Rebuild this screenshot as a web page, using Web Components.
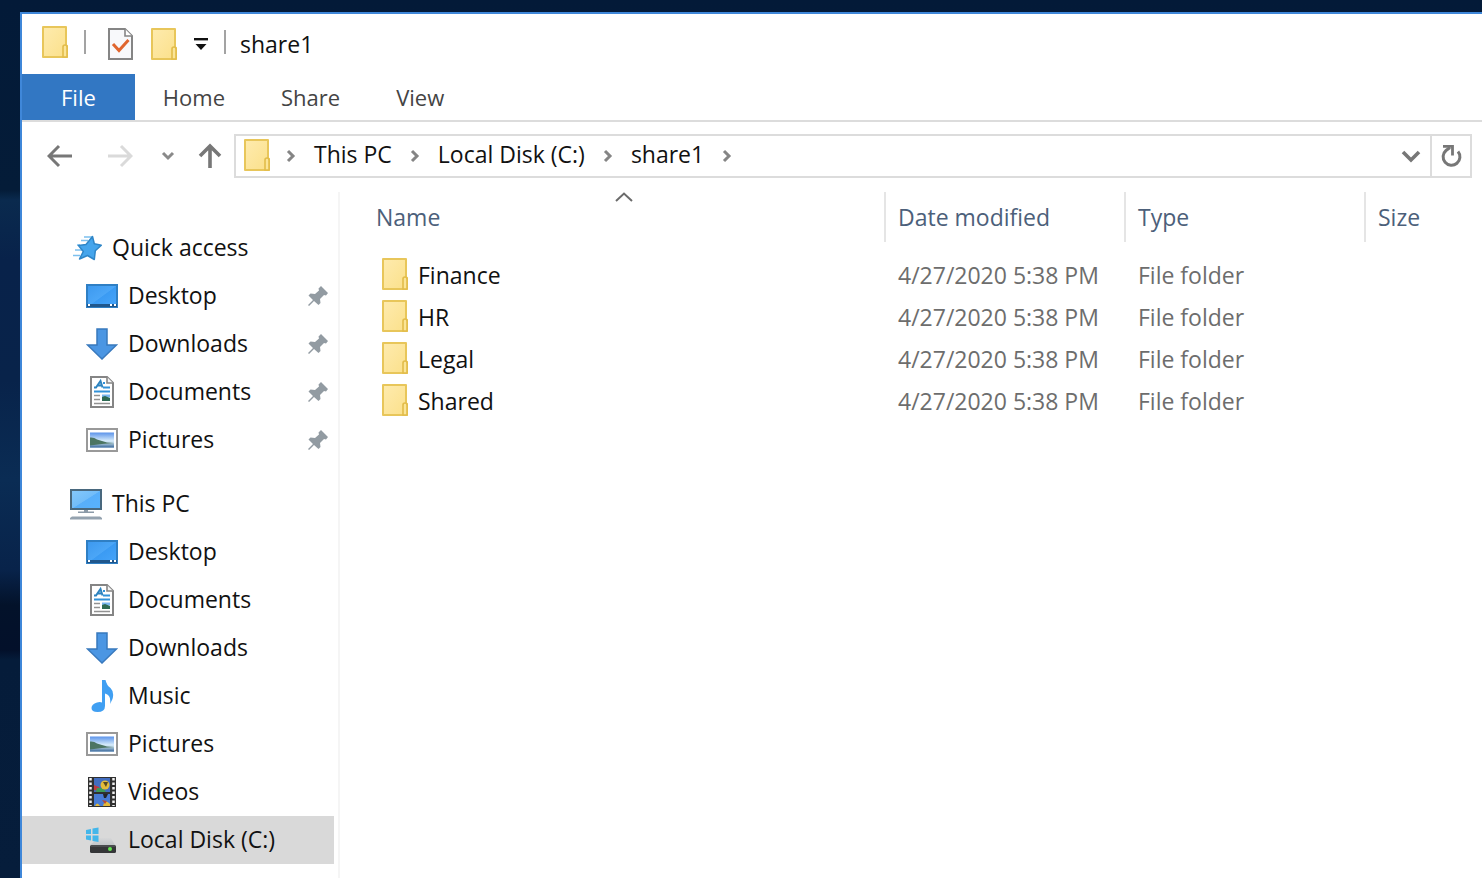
<!DOCTYPE html>
<html lang="en">
<head>
<meta charset="utf-8">
<meta name="viewport" content="width=device-width, initial-scale=1">
<title>share1</title>
<style>
    :root {
        --color-text: #111;
        --color-muted: #6d6d6d;
        --color-heading: #4c607a;
        --color-accent: #3277c3;
        --color-line: #dcdcdc;
        --color-selected: #d9d9d9;
        --text-body: 23px;
        --text-tab: 22px;
    }
    body {
        margin: 0;
        font-family: "Open Sans", "Noto Sans", sans-serif;
        font-size: 23px;
        line-height: 32px;
        color: var(--color-text);
    }
</style>
</head>
<body>
<desktop-background>
    <explorer-window>
        <title-bar slot="title">share1</title-bar>
        <ribbon-tabs slot="ribbon">
            <ribbon-tab active>File</ribbon-tab>
            <ribbon-tab>Home</ribbon-tab>
            <ribbon-tab>Share</ribbon-tab>
            <ribbon-tab>View</ribbon-tab>
        </ribbon-tabs>
        <address-bar slot="address">
            <path-crumb>This PC</path-crumb>
            <path-crumb>Local Disk (C:)</path-crumb>
            <path-crumb>share1</path-crumb>
        </address-bar>
        <nav-pane slot="nav">
            <nav-group>
                <nav-item icon="star" root>Quick access</nav-item>
                <nav-item icon="desktop" pinned>Desktop</nav-item>
                <nav-item icon="download" pinned>Downloads</nav-item>
                <nav-item icon="document" pinned>Documents</nav-item>
                <nav-item icon="picture" pinned>Pictures</nav-item>
            </nav-group>
            <nav-group>
                <nav-item icon="computer" root>This PC</nav-item>
                <nav-item icon="desktop">Desktop</nav-item>
                <nav-item icon="document">Documents</nav-item>
                <nav-item icon="download">Downloads</nav-item>
                <nav-item icon="music">Music</nav-item>
                <nav-item icon="picture">Pictures</nav-item>
                <nav-item icon="video">Videos</nav-item>
                <nav-item icon="disk" selected>Local Disk (C:)</nav-item>
            </nav-group>
        </nav-pane>
        <file-list></file-list>
    </explorer-window>
</desktop-background>

<script>
const icons = {
    folder: [26, 32, `
        <linearGradient id="g" x1="0" y1="0" x2="1" y2="1"><stop offset="0" stop-color="#feebae"/><stop offset="1" stop-color="#fbe08a"/></linearGradient>
        <path d="M1 1h23v18l1 1v11H1z" fill="url(#g)" stroke="#e8c65a" stroke-width="2" stroke-linejoin="round"/>
        <path d="M21 31V21q0-2 2-2t2 2v10z" fill="#fbe597" stroke="#e2bc4a" stroke-width="1.6"/>`],
    check: [26, 32, `
        <path d="M1 1h16l7 7v23H1z" fill="#f8f9fb" stroke="#858585" stroke-width="2"/>
        <path d="M17 1v7h7" fill="#fff" stroke="#858585" stroke-width="1.6"/>
        <path d="M5 16l6 6.500L20.500 12" fill="none" stroke="#e0662f" stroke-width="3"/>`],
    customize: [14, 14, `
        <path d="M0 1h14v2.4H0z" fill="#111"/><path d="M1.5 7h11L7 13z" fill="#111"/>`],
    back: [26, 24, `<path d="M25 12H3M12 2L2 12l10 10" fill="none" stroke="#777" stroke-width="3"/>`],
    forward: [26, 24, `<path d="M1 12h22M14 2l10 10-10 10" fill="none" stroke="#dadada" stroke-width="3"/>`],
    recent: [14, 10, `<path d="M2 2l5 5 5-5" fill="none" stroke="#8a8a8a" stroke-width="3"/>`],
    up: [24, 26, `<path d="M12 25V3M2 13L12 3l10 10" fill="none" stroke="#777" stroke-width="3.6"/>`],
    next: [10, 14, `<path d="M2 2l5 5-5 5" fill="none" stroke="#858585" stroke-width="3"/>`],
    expand: [20, 14, `<path d="M2 3l8 8 8-8" fill="none" stroke="#777" stroke-width="3.6"/>`],
    refresh: [22, 24, `
        <path d="M18 7.500A8.400 8.400 0 1 1 6 6.500L10 3.500" fill="none" stroke="#777" stroke-width="3"/>
        <path d="M3 2.400h9.500v9" fill="none" stroke="#777" stroke-width="2.800"/>`],
    sort: [18, 10, `<path d="M1 9l8-7.5L17 9" fill="none" stroke="#6b6b6b" stroke-width="2"/>`],
    pin: [22, 22, `
        <path d="M14 1l7 7-2 2.500-2-.5-4 4 .5 4-2 2-4.500-4L2 21l-1-1 5-5-4.500-4.500 2-2 4.500.5L12 5.500 11.500 3.500z" fill="#929ba2"/>`],
    star: [32, 28, `
        <path d="M14 3h8M11 6.500h7M5 16h7M3 21.500h7M7 11h3" stroke="#7cc0ee" stroke-width="1.600"/>
        <path d="M22.500 2.500l1.800 7.200 7 1.600-6 5.500-1 8.700-6.800-4-8 3.500 3.800-7.500-4.800-6 7.500-1z" fill="#45a5ec" stroke="#2f86c8" stroke-width="1.500" stroke-linejoin="round"/>`],
    desktop: [32, 24, `
        <linearGradient id="g" x1="0" y1="0" x2="1" y2="1"><stop offset="0" stop-color="#3c98ee"/><stop offset=".5" stop-color="#4ba6f7"/><stop offset=".52" stop-color="#3b9bf3"/><stop offset="1" stop-color="#47a5fa"/></linearGradient>
        <path d="M1 1h30v22H1z" fill="url(#g)" stroke="#2f7fc4" stroke-width="2"/>
        <path d="M1 20h30v3H1z" fill="#20578c"/>
        <path d="M2 21h2m20 0h2m2 0h2" stroke="#fff" stroke-width="2"/>`],
    download: [32, 32, `<path d="M11 1h10v16h9.500L16 31 1.500 17H11z" fill="#4b96e3" stroke="#3979bd" stroke-width="1.500"/>`],
    document: [26, 32, `
        <path d="M2 1h16l6 6v24H2z" fill="#fff" stroke="#858585" stroke-width="2"/>
        <path d="M18 1v6h6" fill="#f4f4f4" stroke="#858585" stroke-width="1.600"/>
        <path d="M5 11.500h2L11.500 5l2 6.500M8 9.500h4" fill="none" stroke="#2d83bf" stroke-width="2"/>
        <path d="M14 7h2M14 11.500h7M5 15.500h16" stroke="#3292d8" stroke-width="2"/>
        <path d="M5 19.500h6M5 23.500h6M5 27.500h16" stroke="#929292" stroke-width="1.600"/>
        <path d="M13 18.500h8v3h-8z" fill="#79b6ef"/><path d="M13 21l3-1 5 2v3h-8z" fill="#2e6a53"/>`],
    picture: [32, 24, `
        <linearGradient id="g" x2="0" y2="1"><stop offset="0" stop-color="#5b93ea"/><stop offset=".55" stop-color="#d5eafa"/><stop offset="1" stop-color="#8eb4d2"/></linearGradient>
        <linearGradient id="w" x2="0" y2="1"><stop offset="0" stop-color="#b5cfdc"/><stop offset="1" stop-color="#39679c"/></linearGradient>
        <path d="M1 1h30v22H1z" fill="#fff" stroke="#999" stroke-width="2"/>
        <path d="M4 4.500h24v15H4z" fill="url(#g)"/>
        <path d="M4 15h24v4.500H4z" fill="url(#w)"/>
        <path d="M4 9.500q4-.5 7 2l5 1.500 5 1.500 7 .5-12 1-12 1.500z" fill="#4c7562"/>`],
    computer: [34, 32, `
        <linearGradient id="g" x1="0" y1="0" x2="1" y2="1"><stop offset="0" stop-color="#86c9fb"/><stop offset=".5" stop-color="#72bdf9"/><stop offset=".52" stop-color="#58affa"/><stop offset="1" stop-color="#58b2fd"/></linearGradient>
        <path d="M2 2h30v19H2z" fill="url(#g)" stroke="#49687e" stroke-width="2"/>
        <path d="M15 22h4v1.500h6V25H9v-1.500h6z" fill="#8b9aa8"/>
        <path d="M3 28.500h28l2 1.500v1.500H1V30z" fill="#94a2af"/>`],
    music: [24, 34, `
        <path d="M12 1h3.500q1 5 5 8 4 4 2 11l-2.500 5q1.500-9-5-10.500V27q0 6-7.500 6-6 0-6-4t5.500-5.500q3-1 5 0z" fill="#409ff2"/>`],
    video: [28, 30, `
        <path d="M0 0h28v30H0z" fill="#303030"/>
        <path d="M6 1h16v14H6z" fill="#426dc0"/><path d="M6 17h16v12H6z" fill="#487bd4"/>
        <path d="M2.500 1v28M25.500 1v28" stroke="#f2f2f2" stroke-width="2.500" stroke-dasharray="2.500 2"/>
        <path d="M6 13V8l5 2 2 4z" fill="#bd3c42"/><path d="M9 11h6l3 4H8z" fill="#3c9a58"/>
        <circle cx="17" cy="8" r="4.500" fill="#e4bd3a"/><path d="M15 5h5l-2 5z" fill="#574b22"/>
        <path d="M15 17h5l-2 4h-2z" fill="#252525"/><path d="M7 29q2-5 5 0m3 0q2-8 7-2v2z" fill="#e2b93b"/>
        <path d="M14 23l5 1-2 3z" fill="#b64938"/>`],
    disk: [32, 28, `
        <linearGradient id="g" x2="0" y2="1"><stop offset="0" stop-color="#d6d7d8"/><stop offset="1" stop-color="#c2c5c8"/></linearGradient>
        <path d="M12 12h13l4 7H4z" fill="url(#g)"/>
        <path d="M0 4l5-1v5H0zM6.500 2.500l6-1V8h-6zM0 9.500h5v5l-5-1zM6.500 9.500h6V16l-6-1z" fill="#43b6ea"/>
        <rect x="4" y="19" width="26" height="8" rx="1.500" fill="#353638"/>
        <path d="M5 20h24" stroke="#606264" stroke-width="1"/>
        <circle cx="24" cy="23" r="2" fill="#62e450"/>`]
}

class BaseElement extends HTMLElement {
    constructor() {
        super()
        this.attachShadow({ mode: 'open' })
    }
    connectedCallback() {
        this.shadowRoot.innerHTML = this.render()
    }
}

const buttonReset = `
    button {
        display: flex;
        align-items: center;
        justify-content: center;
        margin: 0;
        padding: 0;
        border: 0;
        background: none;
        color: inherit;
        font: inherit;
    }
`

customElements.define(
    'ui-icon',
    class extends BaseElement {
        render() {
            const [width, height, shapes] = icons[this.getAttribute('name')]
            return `
                <style>
                    :host { display: block; flex: none; }
                    svg { display: block; }
                </style>
                <svg width="${width}" height="${height}" viewBox="0 0 ${width} ${height}" aria-hidden="true">${shapes}</svg>
            `
        }
    }
)

customElements.define(
    'desktop-background',
    class extends BaseElement {
        render() {
            return `
                <style>
                    :host {
                        display: flex;
                        box-sizing: border-box;
                        min-height: 100vh;
                        padding: 12px 0 0 20px;
                        background: linear-gradient(
                            #031a38 0, #041c38 190px, #0a2a4e 200px, #08224a 260px,
                            #08234a 380px, #0a2c54 480px, #08234a 570px, #03122a 605px,
                            #03102a 650px, #051c3a 660px, #061d3b 100%
                        );
                    }
                    ::slotted(*) { flex: 1; min-width: 0; }
                </style>
                <slot></slot>
            `
        }
    }
)

customElements.define(
    'explorer-window',
    class extends BaseElement {
        render() {
            return `
                <style>
                    :host {
                        display: flex;
                        flex-direction: column;
                        border: solid #3f87d9;
                        border-width: 2px 0 0 2px;
                        background: #fff;
                    }
                    main {
                        display: flex;
                        flex: 1;
                        padding-top: 14px;
                    }
                    slot:not([name])::slotted(*) { flex: 1; min-width: 0; }
                </style>
                <slot name="title"></slot>
                <slot name="ribbon"></slot>
                <slot name="address"></slot>
                <main>
                    <slot name="nav"></slot>
                    <slot></slot>
                </main>
            `
        }
    }
)

customElements.define(
    'title-bar',
    class extends BaseElement {
        render() {
            return `
                <style>
                    ${buttonReset}
                    :host {
                        display: flex;
                        align-items: center;
                        height: 60px;
                        padding-left: 20px;
                    }
                    .line {
                        width: 2px;
                        height: 24px;
                        margin-bottom: 4px;
                        background: #a3a3a3;
                    }
                    .app { margin-bottom: 4px; }
                    .app + .line { margin-left: 16px; }
                    .tools {
                        display: flex;
                        gap: 17px;
                        padding: 0 16px 0 22px;
                    }
                    h1 {
                        margin: 0 0 0 14px;
                        font-size: var(--text-body);
                        font-weight: 400;
                    }
                </style>
                <ui-icon class="app" name="folder"></ui-icon>
                <span class="line"></span>
                <div class="tools">
                    <button aria-label="Properties"><ui-icon name="check"></ui-icon></button>
                    <button aria-label="New folder"><ui-icon name="folder"></ui-icon></button>
                    <button aria-label="Customize Quick Access Toolbar"><ui-icon name="customize"></ui-icon></button>
                </div>
                <span class="line"></span>
                <h1><slot></slot></h1>
            `
        }
    }
)

customElements.define(
    'ribbon-tabs',
    class extends BaseElement {
        render() {
            return `
                <style>
                    :host {
                        display: block;
                        border-bottom: 2px solid var(--color-line);
                    }
                    nav { display: flex; }
                </style>
                <nav aria-label="Ribbon"><slot></slot></nav>
            `
        }
    }
)

customElements.define(
    'ribbon-tab',
    class extends BaseElement {
        render() {
            return `
                <style>
                    ${buttonReset}
                    :host { display: block; color: #444; }
                    button {
                        height: 46px;
                        padding: 0 28px;
                        font-size: var(--text-tab);
                    }
                    :host([active]) button {
                        padding: 0 39px;
                        background: var(--color-accent);
                        color: #fff;
                    }
                </style>
                <button><slot></slot></button>
            `
        }
    }
)

customElements.define(
    'address-bar',
    class extends BaseElement {
        render() {
            return `
                <style>
                    ${buttonReset}
                    :host {
                        display: flex;
                        padding: 12px 10px 0 8px;
                    }
                    .history { display: flex; }
                    .history button { width: 60px; }
                    .history .recent { width: 36px; }
                    .history .up { width: 48px; }
                    .field {
                        display: flex;
                        flex: 1;
                        border: 2px solid var(--color-line);
                    }
                    .path {
                        display: flex;
                        flex: 1;
                        align-items: center;
                        height: 40px;
                        padding-left: 8px;
                    }
                    .folder { margin: 0 16px 3px 0; }
                    .field button { width: 38px; }
                    .field .refresh { border-left: 2px solid var(--color-line); width: 40px; }
                </style>
                <div class="history">
                    <button aria-label="Back"><ui-icon name="back"></ui-icon></button>
                    <button aria-label="Forward" disabled><ui-icon name="forward"></ui-icon></button>
                    <button class="recent" aria-label="Recent locations"><ui-icon name="recent"></ui-icon></button>
                    <button class="up" aria-label="Up"><ui-icon name="up"></ui-icon></button>
                </div>
                <div class="field">
                    <nav class="path" aria-label="Path">
                        <ui-icon class="folder" name="folder"></ui-icon>
                        <ui-icon name="next"></ui-icon>
                        <slot></slot>
                    </nav>
                    <button aria-label="Previous locations"><ui-icon name="expand"></ui-icon></button>
                    <button class="refresh" aria-label="Refresh"><ui-icon name="refresh"></ui-icon></button>
                </div>
            `
        }
    }
)

customElements.define(
    'path-crumb',
    class extends BaseElement {
        render() {
            return `
                <style>
                    :host {
                        display: flex;
                        align-items: center;
                        white-space: nowrap;
                    }
                    a {
                        padding: 0 18px 4px;
                        color: inherit;
                        text-decoration: none;
                    }
                </style>
                <a href="#"><slot></slot></a>
                <ui-icon name="next"></ui-icon>
            `
        }
    }
)

customElements.define(
    'nav-pane',
    class extends BaseElement {
        render() {
            return `
                <style>
                    :host {
                        display: block;
                        flex: none;
                        box-sizing: border-box;
                        width: 318px;
                        padding: 32px 4px 0 0;
                        border-right: 2px solid #f5f5f5;
                    }
                    nav {
                        display: flex;
                        flex-direction: column;
                        gap: 16px;
                    }
                </style>
                <nav aria-label="Folders"><slot></slot></nav>
            `
        }
    }
)

customElements.define(
    'nav-group',
    class extends BaseElement {
        render() {
            return `
                <style>:host { display: block; }</style>
                <slot></slot>
            `
        }
    }
)

customElements.define(
    'nav-item',
    class extends BaseElement {
        render() {
            const pin = this.hasAttribute('pinned') ? '<ui-icon name="pin"></ui-icon>' : ''
            return `
                <style>
                    :host { display: block; }
                    a {
                        display: flex;
                        align-items: center;
                        height: 48px;
                        padding: 0 5px 0 64px;
                        color: inherit;
                        text-decoration: none;
                    }
                    :host([root]) a { padding-left: 48px; }
                    :host([selected]) a { background: var(--color-selected); }
                    .icon {
                        display: flex;
                        justify-content: center;
                        width: 32px;
                        margin-right: 10px;
                    }
                    .label { flex: 1; padding-bottom: 2px; }
                </style>
                <a href="#">
                    <span class="icon"><ui-icon name="${this.getAttribute('icon')}"></ui-icon></span>
                    <span class="label"><slot></slot></span>
                    ${pin}
                </a>
            `
        }
    }
)

const files = ['Finance', 'HR', 'Legal', 'Shared'].map(name => ({
    name,
    modified: '4/27/2020 5:38 PM',
    type: 'File folder'
}))

customElements.define(
    'file-list',
    class extends BaseElement {
        render() {
            const rows = files.map(file => `
                <tr>
                    <td><a href="#"><ui-icon name="folder"></ui-icon>${file.name}</a></td>
                    <td>${file.modified}</td>
                    <td>${file.type}</td>
                    <td></td>
                </tr>
            `)
            return `
                <style>
                    ${buttonReset}
                    :host { display: block; padding-left: 24px; }
                    table {
                        width: 100%;
                        table-layout: fixed;
                        border-collapse: separate;
                        border-spacing: 0;
                    }
                    .name { width: 522px; }
                    .date, .type { width: 240px; }
                    th, td {
                        box-sizing: border-box;
                        padding: 0 0 0 12px;
                        text-align: left;
                        white-space: nowrap;
                    }
                    th {
                        position: relative;
                        height: 50px;
                        border-right: 2px solid #e5e5e5;
                        color: var(--color-heading);
                        font-weight: 400;
                    }
                    th:last-child { border: 0; }
                    th ui-icon {
                        position: absolute;
                        top: 0;
                        left: 50%;
                        translate: -50% 0;
                    }
                    td { height: 42px; color: var(--color-muted); }
                    td:first-child { padding-left: 18px; }
                    td a {
                        display: flex;
                        align-items: center;
                        gap: 10px;
                        color: var(--color-text);
                        text-decoration: none;
                    }
                    td a ui-icon { margin-bottom: 3px; }
                    tbody::before {
                        content: "";
                        display: block;
                        height: 12px;
                    }
                </style>
                <table>
                    <thead>
                        <tr>
                            <th class="name" aria-sort="ascending"><button>Name</button><ui-icon name="sort"></ui-icon></th>
                            <th class="date"><button>Date modified</button></th>
                            <th class="type"><button>Type</button></th>
                            <th><button>Size</button></th>
                        </tr>
                    </thead>
                    <tbody>${rows.join('')}</tbody>
                </table>
            `
        }
    }
)
</script>
</body>
</html>
